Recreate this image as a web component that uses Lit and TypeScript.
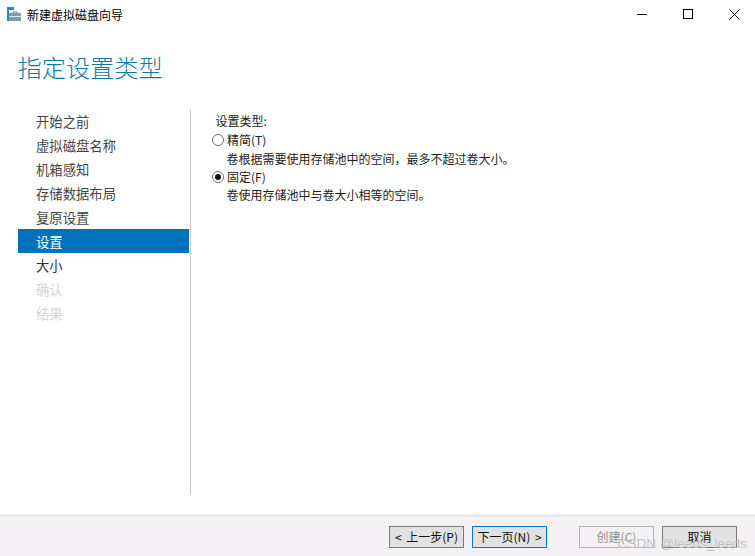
import { LitElement, html, css } from "lit";
import { customElement } from "lit/decorators.js";

@customElement("app-root")
export class AppRoot extends LitElement {
  static styles = css`
    :host {
      display: flex;
      flex-direction: column;
      position: relative;
      width: 755px;
      height: 556px;
      background: #fff;
      overflow: hidden;
      font-family: "Noto Sans CJK SC", "Liberation Sans", sans-serif;
      color: #1a1a1a;
    }
    .titlebar {
      display: flex;
      align-items: flex-start;
      height: 30px;
      flex: none;
      padding-left: 7px;
      gap: 6px;
    }
    .appicon { flex: none; margin-top: 7px; }
    .apptitle { font-size: 12px; color: #000; flex: 1; line-height: 30px; }
    .winbtns { display: flex; align-items: center; margin-right: -2px; }
    .winbtn { width: 46px; height: 28px; display: flex; align-items: center; justify-content: center; }
    .heading {
      flex: none;
      font-size: 24.2px;
      font-weight: 300;
      line-height: 36px;
      color: #0f78a2;
      padding: 19px 0 0 17.5px;
      height: 58px;
      box-sizing: border-box;
    }
    .main {
      flex: 1;
      display: flex;
      padding: 21px 0 20px 18px;
      min-height: 0;
    }
    .nav {
      width: 172px;
      flex: none;
      display: flex;
      flex-direction: column;
    }
    .nav-item {
      height: 24px;
      box-sizing: border-box;
      padding: 1px 0 0 18px;
      line-height: 24px;
      font-size: 13.33px;
      color: #444;
      margin-right: 1px;
    }
    .nav-item.active { background: #0072bc; color: #fff; }
    .nav-item.strong { color: #333; }
    .nav-item.disabled { color: #d6d3d8; }
    .divider { width: 1px; background: #c9c9c9; flex: none; }
    .content { flex: 1; padding: 3px 0 0 21px; font-size: 12px; color: #222; }
    .label { line-height: 17px; margin-left: 3.5px; margin-bottom: 2px; }
    .radio { display: flex; align-items: center; line-height: 18px; height: 18px; gap: 3px; }
    .desc { margin-left: 14.5px; line-height: 18px; height: 18px; }
    .desc.first { margin-top: 1px; }
    .footer {
      flex: none;
      height: 41px;
      box-sizing: border-box;
      background: #f4f1f4;
      border-top: 1px solid #dcdadc;
      display: flex;
      align-items: flex-start;
      padding: 10px 18px 0 389px;
      gap: 8px;
    }
    .btn {
      width: 75px;
      height: 22px;
      box-sizing: border-box;
      border: 1px solid #7a7a7a;
      background: #e1e1e1;
      font-size: 12px;
      line-height: 19px;
      word-spacing: 2px;
      text-align: center;
      color: #111;
      white-space: pre;
    }
    .btn.default { border-color: #0078d7; }
    .btn.off { background: #f4f1f4; border-color: #b4b4b4; color: #8f8f8f; margin-left: 24px; }
    .watermark {
      position: absolute;
      right: 8px;
      bottom: 4px;
      font-family: "Liberation Sans", "Noto Sans CJK SC", sans-serif;
      font-size: 13.7px;
      line-height: 16px;
      color: rgba(165, 165, 165, 0.7);
      text-shadow: 0 0 1px rgba(255, 255, 255, 0.8);
    }
  `;

  render() {
    const steps: [string, string][] = [
      ["开始之前", ""],
      ["虚拟磁盘名称", ""],
      ["机箱感知", ""],
      ["存储数据布局", ""],
      ["复原设置", ""],
      ["设置", "active"],
      ["大小", "strong"],
      ["确认", "disabled"],
      ["结果", "disabled"],
    ];
    return html`
      <div class="titlebar">
        <svg class="appicon" width="14" height="14" viewBox="0 0 14 14">
          <rect x="0" y="0" width="7" height="3" fill="#1e88e5"/>
          <rect x="0" y="0" width="2" height="14" fill="#1e88e5"/>
          <rect x="2" y="6" width="12" height="8" fill="#7d9bb3"/>
          <path d="M6 6V5H10V6" stroke="#5f7f97" fill="none"/>
          <rect x="2" y="9" width="12" height="1" fill="#dfe8ee"/>
        </svg>
        <div class="apptitle">新建虚拟磁盘向导</div>
        <div class="winbtns">
          <div class="winbtn">
            <svg width="10" height="10" viewBox="0 0 10 10"><path d="M0 5.5H10" stroke="#000" fill="none"/></svg>
          </div>
          <div class="winbtn">
            <svg width="10" height="10" viewBox="0 0 10 10"><rect x="0.5" y="0.5" width="9" height="9" stroke="#000" fill="none"/></svg>
          </div>
          <div class="winbtn">
            <svg width="11" height="11" viewBox="0 0 11 11"><path d="M0.5 0.5L10.5 10.5M10.5 0.5L0.5 10.5" stroke="#000" stroke-width="1" fill="none"/></svg>
          </div>
        </div>
      </div>
      <div class="heading">指定设置类型</div>
      <div class="main">
        <div class="nav">
          ${steps.map(([t, c]) => html`<div class="nav-item ${c}">${t}</div>`)}
        </div>
        <div class="divider"></div>
        <div class="content">
          <div class="label">设置类型:</div>
          <div class="radio">
            <svg width="12" height="12" viewBox="0 0 12 12"><circle cx="6" cy="6" r="5.5" fill="#fff" stroke="#6d6d6d"/></svg>
            <span>精简(T)</span>
          </div>
          <div class="desc first">卷根据需要使用存储池中的空间，最多不超过卷大小。</div>
          <div class="radio">
            <svg width="12" height="12" viewBox="0 0 12 12"><circle cx="6" cy="6" r="5.5" fill="#fff" stroke="#6d6d6d"/><circle cx="6" cy="6" r="3" fill="#111"/></svg>
            <span>固定(F)</span>
          </div>
          <div class="desc">卷使用存储池中与卷大小相等的空间。</div>
        </div>
      </div>
      <div class="footer">
        <div class="btn">&lt; 上一步(P)</div>
        <div class="btn default">下一页(N) &gt;</div>
        <div class="btn off">创建(C)</div>
        <div class="btn">取消</div>
      </div>
      <div class="watermark">CSDN @leeds_leeds</div>
    `;
  }
}
